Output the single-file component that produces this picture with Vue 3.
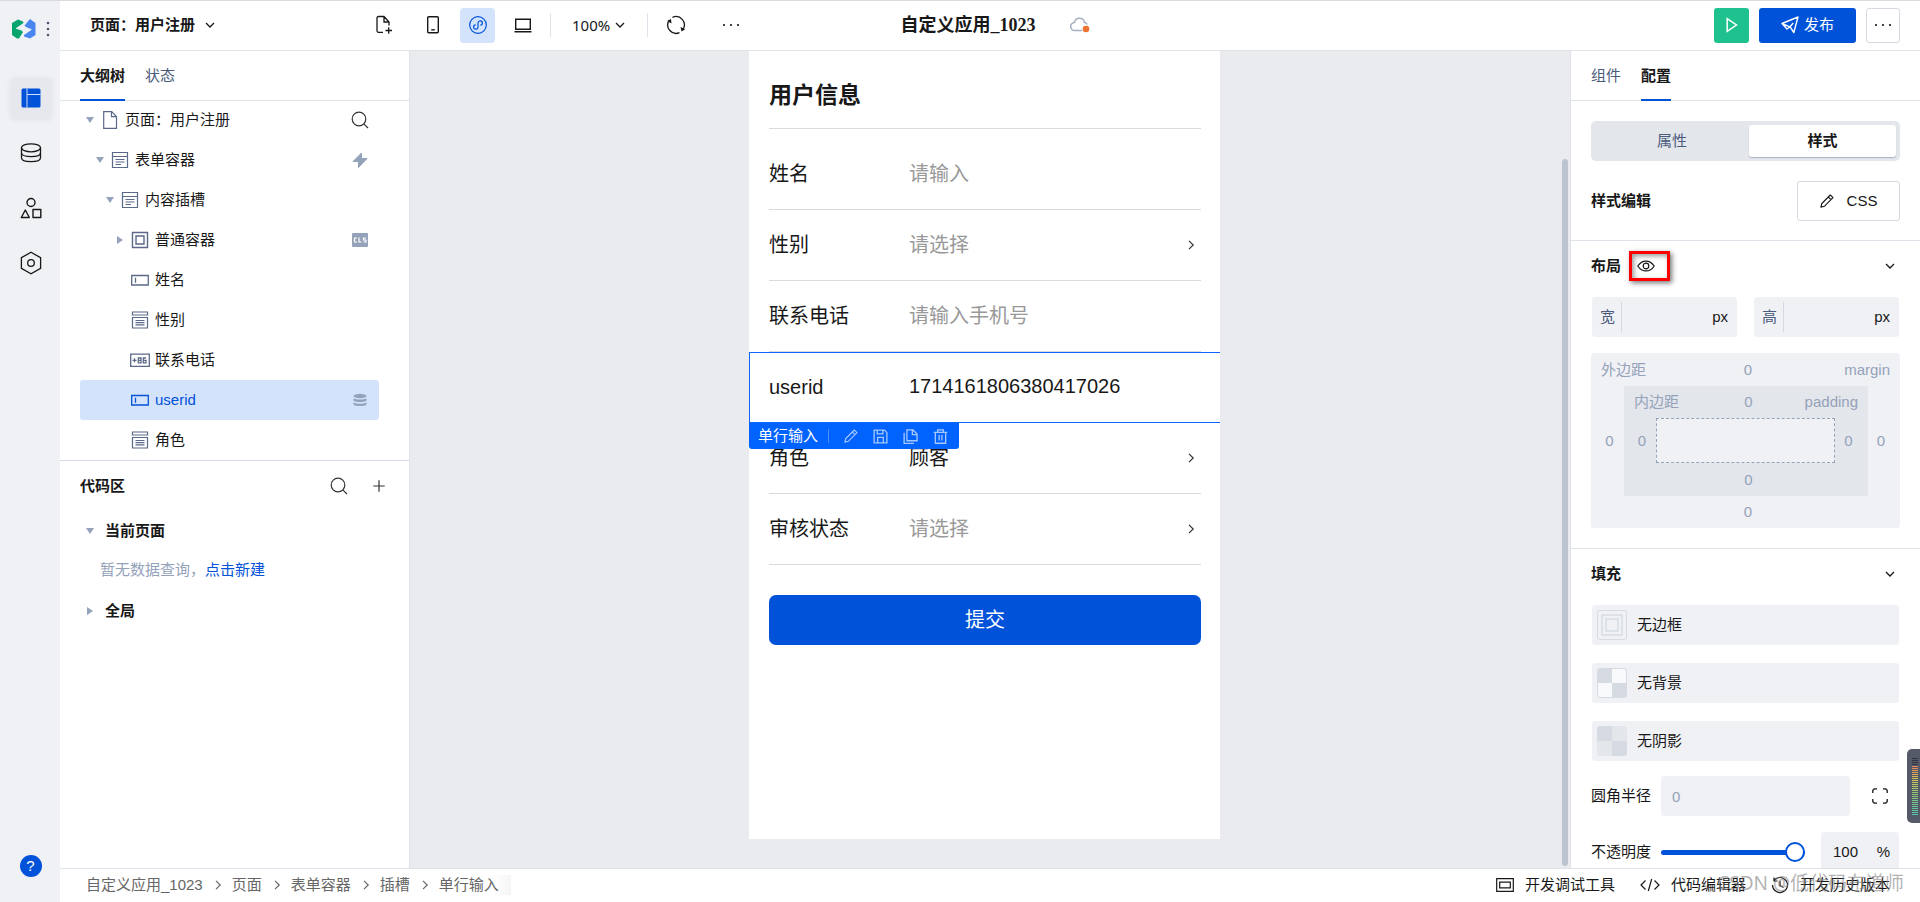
<script setup>
import { ref } from 'vue'

const tree = [
  { level: 0, caret: 'down', icon: 'page', label: '页面：用户注册', badge: 'search' },
  { level: 1, caret: 'down', icon: 'form', label: '表单容器', badge: 'bolt' },
  { level: 2, caret: 'down', icon: 'form', label: '内容插槽' },
  { level: 3, caret: 'right', icon: 'box', label: '普通容器', badge: 'cls' },
  { level: 3, icon: 'input', label: '姓名' },
  { level: 3, icon: 'select', label: '性别' },
  { level: 3, icon: 'phone86', label: '联系电话' },
  { level: 3, icon: 'input', label: 'userid', badge: 'stack', active: true },
  { level: 3, icon: 'select', label: '角色' },
]

const fields = [
  { id: 'name', label: '姓名', type: 'text', placeholder: '请输入', value: '' },
  { id: 'gender', label: '性别', type: 'select', value: '请选择', empty: true },
  { id: 'tel', label: '联系电话', type: 'text', placeholder: '请输入手机号', value: '' },
  { id: 'userid', label: 'userid', type: 'text', placeholder: '', value: '1714161806380417026', selected: true },
  { id: 'role', label: '角色', type: 'select', value: '顾客' },
  { id: 'audit', label: '审核状态', type: 'select', value: '请选择', empty: true },
]

const crumbs = ['自定义应用_1023', '页面', '表单容器', '插槽', '单行输入']
const fills = [
  { label: '无边框', kind: 'frame' },
  { label: '无背景', kind: 'checker' },
  { label: '无阴影', kind: 'shade' },
]
const opacity = ref(100)
</script>

<template>
  <div class="app">
    <svg class="defs" aria-hidden="true">
      <symbol id="i-down" viewBox="0 0 10 10"><path d="M1 3l4 4 4-4" fill="none" stroke="currentColor" stroke-width="1.3" /></symbol>
      <symbol id="i-right" viewBox="0 0 10 10"><path d="M3 .8L7.2 5 3 9.2" fill="none" stroke="currentColor" stroke-width="1.2" /></symbol>
      <symbol id="i-search" viewBox="0 0 18 18"><g fill="none" stroke="currentColor" stroke-width="1.2"><circle cx="8" cy="8" r="6.8" /><path d="M12.8 12.8L17 17" /></g></symbol>
      <symbol id="i-bolt" viewBox="0 0 18 18"><path d="M10.500 2L2 10.500h5.500L7.500 16.500 16 7.500h-5.500V2z" fill="#94a2ba" stroke="#94a2ba" /></symbol>
      <symbol id="i-cls" viewBox="0 0 18 18"><rect x="1" y="2" width="16" height="14" rx="1" fill="#94a2ba" /><path d="M6 7H3.500v4H6M8 6.500V11h2.500M15 7h-2.500v2H15v2h-2.500" fill="none" stroke="#fff" stroke-width="1.200" /></symbol>
      <symbol id="i-stack" viewBox="0 0 18 18"><g fill="#94a2ba"><ellipse cx="9" cy="5" rx="6.500" ry="2.200" /><path d="M2.500 7.200c3 1.800 10 1.800 13 0v2.300c-2 2-11 2-13 0zM2.500 11.500c3 1.800 10 1.800 13 0v2c-2 2-11 2-13 0z" /></g></symbol>
      <symbol id="i-page" viewBox="0 0 18 18"><path d="M2.700.7h8L15.500 5.500v11.800H2.700zM10.500.7v5h5" fill="none" stroke="currentColor" stroke-width="1.200" /></symbol>
      <symbol id="i-form" viewBox="0 0 18 18"><path d="M1.500 1.500h15v15h-15zM1.500 5.500h15M4.500 8.500h9M4.500 11h9M4.500 13.500h5.500" fill="none" stroke="currentColor" stroke-width="1.200" /></symbol>
      <symbol id="i-box" viewBox="0 0 18 18"><path d="M1.500 1.500h15v15h-15zM5 5h8v8H5z" fill="none" stroke="currentColor" stroke-width="1.400" /></symbol>
      <symbol id="i-input" viewBox="0 0 18 18"><path d="M.7 4.500h16.600v9.500H.7zM4.500 6.700v5" fill="none" stroke="currentColor" stroke-width="1.300" /></symbol>
      <symbol id="i-select" viewBox="0 0 18 18"><path d="M1.500 1h15v3h-15zM1.500 6.500h15v10.500h-15zM4.500 9.500h9M4.500 11.700h9M4.500 13.900h9" fill="none" stroke="currentColor" stroke-width="1.200" /></symbol>
      <symbol id="i-phone86" viewBox="0 0 20 18"><path d="M.7 3.200h18.600v12.100H.7z" fill="none" stroke="currentColor" stroke-width="1.300" /><path d="M2.500 9.300h4M4.500 7.300v4M8.300 7h2.700v4.800H8.300zM8.300 9.300H11M16 7h-2.700v4.800H16V9.300h-2.700" fill="none" stroke="currentColor" stroke-width="1.300" /></symbol>
      <symbol id="i-plus" viewBox="0 0 12 12"><path d="M6 .3v11.400M.3 6h11.400" fill="none" stroke="currentColor" stroke-width="1.200" /></symbol>
      <symbol id="i-layout" viewBox="0 0 20 20"><rect x=".5" y=".5" width="19" height="19" rx="1.500" fill="#0052d9" /><path d="M6 .5v19M6 6.500h13.500" stroke="#cfe0fb" stroke-width="1" /></symbol>
      <symbol id="i-db" viewBox="0 0 22 22"><g fill="none" stroke="currentColor" stroke-width="1.300"><ellipse cx="11" cy="5.800" rx="9.500" ry="4" /><path d="M1.500 5.800v10c0 5.200 19 5.200 19 0v-10M1.500 10.700c0 5.200 19 5.200 19 0" /></g></symbol>
      <symbol id="i-shapes" viewBox="0 0 22 22"><g fill="none" stroke="currentColor" stroke-width="1.400" stroke-linejoin="round"><circle cx="11" cy="5.500" r="4" /><path d="M5.300 13l4 7.500h-8zM13 12.500h7.800v8H13z" /></g></symbol>
      <symbol id="i-hex" viewBox="0 0 22 24"><g fill="none" stroke="currentColor" stroke-width="1.300"><path d="M11 1.300l9.600 5.400v10.600L11 22.700l-9.600-5.400V6.700z" /><circle cx="11" cy="12" r="3.300" /></g></symbol>
      <symbol id="i-fileplus" viewBox="0 0 18 20"><path d="M8 17.300H3.500a1.500 1.500 0 0 1-1.500-1.500V3a1.500 1.500 0 0 1 1.500-1.500H9L14 7v3.500M9 1.500V7h5M10.500 15.500h6.500M13.700 12.300v6.500" fill="none" stroke="currentColor" stroke-width="1.300" /></symbol>
      <symbol id="i-mobile" viewBox="0 0 18 20"><g fill="none" stroke="currentColor" stroke-width="1.400"><rect x="3.700" y="1.700" width="10.600" height="16" rx="1" /><path d="M7.200 14.800h3.600" /></g></symbol>
      <symbol id="i-mini" viewBox="0 0 18 18"><g fill="none" stroke="#0052d9" stroke-width="1.200"><circle cx="9" cy="9" r="8.300" /><path d="M6.700 8.800a2.200 2.200 0 1 0 2.300 2.400V6.800a2.200 2.200 0 1 1 2.300 2.400" /></g></symbol>
      <symbol id="i-laptop" viewBox="0 0 18 18"><path d="M1.700 3.200h14.600v10.100H1.700zM.5 15.800h17" fill="none" stroke="currentColor" stroke-width="1.400" /></symbol>
      <symbol id="i-refresh" viewBox="0 0 20 20"><g fill="none" stroke="currentColor" stroke-width="1.300"><path d="M6.500 2.300a8.300 8.300 0 0 1 10.500 12M13.500 17.600A8.300 8.300 0 0 1 3 5.700" /></g><path d="M14.500 12l1 4.500 3.700-2.300zM5.500 8.500L5 4 1.200 6z" fill="currentColor" /></symbol>
      <symbol id="i-dots" viewBox="0 0 18 4"><g fill="currentColor"><circle cx="2" cy="2" r="1.100" /><circle cx="9" cy="2" r="1.100" /><circle cx="16" cy="2" r="1.100" /></g></symbol>
      <symbol id="i-cloud" viewBox="0 0 20 16"><path d="M12 13.500H4.800a4 4 0 0 1-.3-8C5.500 0 13.500 0 14.300 5.200c1.500.3 2.500 1.300 3 2.300" fill="none" stroke="#a6b1c4" stroke-width="1.500" /><circle cx="16" cy="12" r="3.300" fill="#ed7131" /></symbol>
      <symbol id="i-play" viewBox="0 0 12 16"><path d="M1.200 1.700v12.600L10.500 8z" fill="none" stroke="#fff" stroke-width="1.500" /></symbol>
      <symbol id="i-send" viewBox="0 0 18 18"><path d="M1 7.500L17 1l-4.200 15.500-3.500-5.300zM1 7.500l5 5.500 2.800-2 3.500-4" fill="none" stroke="#fff" stroke-width="1.400" stroke-linejoin="round" /></symbol>
      <symbol id="i-pencil" viewBox="0 0 14 14"><path d="M.9 13.100l.9-3.600L10.300 1l2.700 2.700-8.500 8.500zM8.300 3L11 5.700" fill="none" stroke="currentColor" stroke-width="1.100" stroke-linejoin="round" /></symbol>
      <symbol id="i-save" viewBox="0 0 16 16"><path d="M1.200 1.200h11l2.600 2.600v11H1.200zM4.500 1.200v4h6v-4M5 14.500V9h6v5.500" fill="none" stroke="currentColor" stroke-width="1.400" /></symbol>
      <symbol id="i-copy" viewBox="0 0 16 16"><path d="M4.200 1h6.500L15 5.300v7.200H4.200zM10 1v5h5M1.200 4v11.300h10.500" fill="none" stroke="currentColor" stroke-width="1.400" /></symbol>
      <symbol id="i-trash" viewBox="0 0 16 16"><path d="M.8 3.500h14.400M5 3.500V.9h6v2.600M2.500 3.500v11.700h11V3.500M6.500 6.300v6M9.500 6.300v6" fill="none" stroke="currentColor" stroke-width="1.400" /></symbol>
      <symbol id="i-eye" viewBox="0 0 18 12"><g fill="none" stroke="currentColor" stroke-width="1.200"><path d="M.8 6C5-.6 13-.6 17.200 6 13 12.600 5 12.600.8 6z" /><circle cx="9" cy="6" r="2.800" /></g></symbol>
      <symbol id="i-corners" viewBox="0 0 16 16"><path d="M.8 5V2.300L2.300.8H5M11 .8h2.700l1.500 1.500V5M15.200 11v2.700l-1.500 1.500H11M5 15.200H2.300L.8 13.700V11" fill="none" stroke="currentColor" stroke-width="1.300" /></symbol>
      <symbol id="i-debug" viewBox="0 0 18 14"><path d="M.7.7h16.600v12.600H.7zM3.700 4.200h10.600v5.600H3.700z" fill="none" stroke="currentColor" stroke-width="1.200" /></symbol>
      <symbol id="i-code" viewBox="0 0 20 14"><path d="M5.500 2.500L1 7l4.500 4.500M14.500 2.500L19 7l-4.500 4.500M11.700 1l-3.400 12" fill="none" stroke="currentColor" stroke-width="1.200" /></symbol>
      <symbol id="i-history" viewBox="0 0 18 18"><path d="M3 4.500A7.500 7.500 0 1 1 1.500 9M3 1.500v3.500h3.500M9 5v4.500l3.500 2" fill="none" stroke="currentColor" stroke-width="1.200" /></symbol>
    </svg>

    <nav class="rail">
      <div class="brand">
        <svg width="24" height="20" viewBox="0 0 24 20">
          <path d="M0 4L6 .5l5 2 .5 1.500L3.500 9.500l6 2L11 13 7 19.500H5L0 16z" fill="#07a56e" />
          <path d="M18 0l5.500 4v12L18 19.500l-6-2V16l8-5.500L14 8l-1.500-1.500z" fill="#4a86f0" />
        </svg>
        <svg class="brand-dots" width="4" height="16" viewBox="0 0 4 16"><g fill="#4b5670"><circle cx="2" cy="2" r="1.300" /><circle cx="2" cy="8" r="1.300" /><circle cx="2" cy="14" r="1.300" /></g></svg>
      </div>
      <button class="rail-btn on" aria-label="布局"><svg width="20" height="20"><use href="#i-layout" /></svg></button>
      <button class="rail-btn" aria-label="数据"><svg width="22" height="22"><use href="#i-db" /></svg></button>
      <button class="rail-btn" aria-label="素材"><svg width="22" height="22"><use href="#i-shapes" /></svg></button>
      <button class="rail-btn" aria-label="设置"><svg width="22" height="24"><use href="#i-hex" /></svg></button>
      <button class="help">?</button>
    </nav>

    <div class="main">
      <header class="top">
        <div class="top-left">
          <button class="page-pick">页面：用户注册<svg width="10" height="10"><use href="#i-down" /></svg></button>
          <div class="tools">
            <button class="tool" aria-label="新建页面"><svg width="18" height="20"><use href="#i-fileplus" /></svg></button>
            <button class="tool phone-tool" aria-label="手机"><svg width="18" height="20"><use href="#i-mobile" /></svg></button>
            <button class="tool on" aria-label="小程序"><svg width="18" height="18"><use href="#i-mini" /></svg></button>
            <button class="tool" aria-label="电脑"><svg width="18" height="18"><use href="#i-laptop" /></svg></button>
            <button class="zoom">100%<svg width="10" height="10"><use href="#i-down" /></svg></button>
            <button class="tool refresh" aria-label="刷新"><svg width="20" height="20"><use href="#i-refresh" /></svg></button>
            <button class="tool" aria-label="更多"><svg width="18" height="4"><use href="#i-dots" /></svg></button>
          </div>
        </div>
        <div class="title"><span>自定义应用_1023</span><svg width="20" height="16"><use href="#i-cloud" /></svg></div>
        <div class="top-right">
          <button class="play" aria-label="预览"><svg width="12" height="16"><use href="#i-play" /></svg></button>
          <button class="publish"><svg width="18" height="18"><use href="#i-send" /></svg>发布</button>
          <button class="more" aria-label="更多"><svg width="18" height="4"><use href="#i-dots" /></svg></button>
        </div>
      </header>

      <div class="body">
        <aside class="side">
          <div class="tabs"><button class="tab on">大纲树</button><button class="tab">状态</button></div>
          <div class="tree">
            <div v-for="(n, i) in tree" :key="i" class="node" :class="[{ active: n.active }, 'lv' + n.level]">
              <span class="caret"><i v-if="n.caret" :class="n.caret"></i></span>
              <svg class="node-icon" width="20" height="18"><use :href="'#i-' + n.icon" /></svg>
              <button class="node-label">{{ n.label }}</button>
              <svg v-if="n.badge" class="badge" width="18" height="18"><use :href="'#i-' + n.badge" /></svg>
            </div>
          </div>
          <div class="code">
            <div class="code-head">
              <h2>代码区</h2>
              <button aria-label="搜索"><svg width="18" height="18"><use href="#i-search" /></svg></button>
              <button aria-label="新增"><svg width="12" height="12"><use href="#i-plus" /></svg></button>
            </div>
            <div class="code-row"><span class="caret"><i class="down"></i></span>当前页面</div>
            <p class="none">暂无数据查询，<a href="#new">点击新建</a></p>
            <div class="code-row"><span class="caret"><i class="right"></i></span>全局</div>
          </div>
        </aside>

        <main class="canvas">
          <form class="phone" @submit.prevent>
            <h1>用户信息</h1>
            <div v-for="f in fields" :key="f.id" class="field" :class="{ selected: f.selected }">
              <label :for="f.id">{{ f.label }}</label>
              <input v-if="f.type === 'text'" :id="f.id" type="text" :placeholder="f.placeholder" :value="f.value">
              <template v-else>
                <select :id="f.id" :class="{ empty: f.empty }"><option>{{ f.value }}</option></select>
                <svg class="arrow" width="10" height="10"><use href="#i-right" /></svg>
              </template>
              <div v-if="f.selected" class="actions">
                <span>单行输入</span>
                <button type="button" aria-label="编辑"><svg width="14" height="14"><use href="#i-pencil" /></svg></button>
                <button type="button" aria-label="保存"><svg width="15" height="15"><use href="#i-save" /></svg></button>
                <button type="button" aria-label="复制"><svg width="15" height="15"><use href="#i-copy" /></svg></button>
                <button type="button" aria-label="删除"><svg width="15" height="15"><use href="#i-trash" /></svg></button>
              </div>
            </div>
            <button class="submit">提交</button>
          </form>
          <div class="scroll"></div>
        </main>

        <aside class="panel">
          <div class="tabs"><button class="tab">组件</button><button class="tab on">配置</button></div>
          <div class="panel-body">
            <section class="sec first">
              <div class="segment"><button>属性</button><button class="on">样式</button></div>
              <div class="edit">
                <h3>样式编辑</h3>
                <button class="css"><svg width="14" height="14"><use href="#i-pencil" /></svg>CSS</button>
              </div>
            </section>
            <section class="sec">
              <div class="sec-head">
                <h3>布局</h3>
                <button class="mark" aria-label="显示"><svg width="18" height="12"><use href="#i-eye" /></svg></button>
                <svg class="fold" width="10" height="10"><use href="#i-down" /></svg>
              </div>
              <div class="sizes">
                <div class="size"><label for="w">宽</label><input id="w" type="text"><span>px</span></div>
                <div class="size"><label for="h">高</label><input id="h" type="text"><span>px</span></div>
              </div>
              <div class="boxm">
                <div class="boxm-top"><span>外边距</span><input value="0" aria-label="上外边距"><span>margin</span></div>
                <input value="0" aria-label="左外边距" class="l">
                <div class="boxm pad">
                  <div class="boxm-top"><span>内边距</span><input value="0" aria-label="上内边距"><span>padding</span></div>
                  <input value="0" aria-label="左内边距" class="l">
                  <div class="core"></div>
                  <input value="0" aria-label="右内边距" class="r">
                  <input value="0" aria-label="下内边距" class="b">
                </div>
                <input value="0" aria-label="右外边距" class="r">
                <input value="0" aria-label="下外边距" class="b">
              </div>
            </section>
            <section class="sec">
              <div class="sec-head"><h3>填充</h3><svg class="fold" width="10" height="10"><use href="#i-down" /></svg></div>
              <div class="fills">
                <button v-for="f in fills" :key="f.kind" class="fill">
                  <span class="swatch" :class="f.kind"></span>{{ f.label }}
                </button>
              </div>
              <div class="line">
                <label for="radius">圆角半径</label>
                <input id="radius" class="radius" type="text" placeholder="0">
                <button class="corner" aria-label="独立圆角"><svg width="16" height="16"><use href="#i-corners" /></svg></button>
              </div>
              <div class="line">
                <label for="op">不透明度</label>
                <input id="op" v-model="opacity" class="range" type="range" min="0" max="100">
                <div class="percent"><input v-model="opacity" type="text" aria-label="不透明度数值"><span>%</span></div>
              </div>
            </section>
          </div>
        </aside>
      </div>

      <footer class="foot">
        <div class="crumbs">
          <template v-for="(c, i) in crumbs" :key="c">
            <svg v-if="i" width="10" height="10"><use href="#i-right" /></svg>
            <a href="#crumb">{{ c }}</a>
          </template>
        </div>
        <div class="links">
          <button><svg width="18" height="14"><use href="#i-debug" /></svg>开发调试工具</button>
          <button><svg width="20" height="14"><use href="#i-code" /></svg>代码编辑器</button>
          <button><svg width="18" height="18"><use href="#i-history" /></svg>开发历史版本</button>
        </div>
        <div class="mark-text">CSDN @低代码布道师</div>
      </footer>
    </div>
    <div class="meter"><i></i></div>
  </div>
</template>

<style>
body { margin: 0; }
</style>

<style scoped>
* { box-sizing: border-box; }
.app {
  position: relative; display: flex; height: 100vh; overflow: hidden;
  font: 15px/20px "Liberation Sans", "Noto Sans CJK SC", sans-serif; color: #181818; background: #fff;
  box-shadow: inset 0 1px #d9dade;
}
.defs { position: absolute; width: 0; height: 0; }
button, input, select { font: inherit; color: inherit; border: 0; background: none; padding: 0; margin: 0; outline: 0; min-width: 0; }
button { display: inline-flex; align-items: center; justify-content: center; white-space: nowrap; cursor: pointer; }
select { appearance: none; }
svg { flex: none; display: block; }
h1, h2, h3, p { margin: 0; }
h2, h3 { font-size: 15px; font-weight: 600; }
a { text-decoration: none; }

.rail { width: 60px; flex: none; display: flex; flex-direction: column; align-items: center; gap: 15px; background: #f0f1f5; border-top: 1px solid #d9dade; padding-bottom: 25px; padding-left: 1px; }
.brand { width: 100%; height: 62px; padding: 18px 0 0 11px; display: flex; gap: 10px; }
.brand-dots { margin-top: 2px; }
.rail-btn { width: 40px; height: 40px; border-radius: 4px; }
.rail-btn.on { background: #e6e8ed; box-shadow: 0 1px 6px #00000014; }
.help { margin-top: auto; width: 22px; height: 22px; border-radius: 50%; background: #0052d9; color: #fff; }

.main { flex: 1; min-width: 0; display: flex; flex-direction: column; }
.top { height: 51px; flex: none; display: grid; grid-template-columns: 1fr auto 1fr; align-items: center; padding: 0 20px 0 30px; border-bottom: 1px solid #e0e3ea; }
.top-left { display: flex; align-items: center; gap: 151px; }
.page-pick { font-weight: 600; gap: 10px; }
.tools { display: flex; align-items: center; gap: 10px; }
.tool { width: 35px; height: 35px; border-radius: 4px; }
.phone-tool { margin-left: 4px; }
.tool.on { background: #d4e3fc; }
.zoom { height: 24px; gap: 5px; padding: 0 22px 0 21px; border: solid #dfe2e8; border-width: 0 1px; font-family: "Noto Sans", sans-serif; }
.refresh { margin: 0 10px 0 0; }
.title { display: flex; align-items: center; gap: 34px; font: 600 18px/24px "Liberation Serif", "Noto Sans CJK SC", serif; }
.top-right { display: flex; justify-content: flex-end; gap: 10px; }
.play { width: 35px; height: 35px; border-radius: 3px; background: #1fc28f; }
.publish { width: 97px; height: 35px; border-radius: 3px; background: #0052d9; color: #fff; gap: 5px; }
.more { width: 34px; height: 35px; border-radius: 3px; border: 1px solid #d5d9e2; }

.body { flex: 1; min-height: 0; display: flex; }
.side { width: 350px; flex: none; border-right: 1px solid #dfe2ea; }
.tabs { height: 50px; flex: none; display: flex; gap: 20px; padding: 0 20px; border-bottom: 1px solid #e0e3ea; }
.tab { height: 50px; padding-top: 2px; border-bottom: 2px solid transparent; color: #4b5b7c; }
.tab.on { color: #181818; font-weight: 600; border-color: #0052d9; }
.tree { margin-top: -1px; padding: 0 30px 0 20px; border-bottom: 1px solid #d5d9e6; }
.node { height: 40px; display: flex; align-items: center; padding-right: 10px; border-radius: 3px; }
.lv1 { padding-left: 10px; }
.lv2 { padding-left: 20px; }
.lv3 { padding-left: 30px; }
.caret { width: 20px; flex: none; display: flex; justify-content: center; }
.down { border: 4px solid transparent; border-top: 6px solid #94a2ba; border-bottom: 0; }
.right { border: 4px solid transparent; border-left: 6px solid #94a2ba; border-right: 0; }
.node-icon { color: #5b6a88; }
.node-label { margin-left: 5px; }
.badge { margin-left: auto; color: #333; }
.active { background: #d4e3fc; }
.active .node-icon, .active .node-label { color: #0052d9; }
.code { padding: 0 24px 0 20px; }
.code-head { height: 50px; display: flex; align-items: center; gap: 25px; color: #333; }
.code-head h2 { margin-right: auto; color: #181818; }
.code-row { height: 40px; display: flex; align-items: center; gap: 5px; font-weight: 600; }
.none { line-height: 38px; padding: 0 0 2px 20px; color: #94a2ba; }
.none a { color: #0052d9; }

.canvas { flex: 1; min-width: 0; display: flex; background: #eaebef; }
.phone { width: 471px; margin: 0 auto 29px; padding: 0 19px 0 20px; background: #fff; }
h1 { height: 78px; margin-bottom: 10px; padding-top: 10px; font-size: 23px; line-height: 68px; border-bottom: 1px solid #d9dade; }
.field { position: relative; height: 71px; display: flex; align-items: center; font-size: 20px; line-height: 28px; border-bottom: 1px solid #d9dade; }
.field label { width: 140px; flex: none; }
.field > input, .field select { flex: 1; height: 30px; }
.field > input::placeholder { color: #999; opacity: 1; }
.empty { color: #999; }
.arrow { margin-right: 5px; color: #333; }
.selected { margin: 0 -19px 0 -20px; padding: 0 19px 2px 19px; border: 1px solid #0f67ff; border-right: 0; }
.actions { position: absolute; left: -1px; top: 70px; z-index: 1; height: 26px; display: flex; align-items: center; gap: 15px; padding: 0 11px 0 9px; font-size: 15px; line-height: 20px; color: #fff; background: #0062ff; border-radius: 0 0 3px 3px; }
.actions span { padding-right: 10px; border-right: 1px solid #4d91ff; line-height: 14px; }
.actions button { color: #a6c8ff; }
.submit { width: 100%; height: 50px; margin-top: 30px; border-radius: 7px; background: #0052d9; color: #fff; font-size: 20px; }
.scroll { width: 6px; margin: 108px 2px 2px 3px; border-radius: 3px; background: #bcc4d0; }

.panel { width: 350px; flex: none; display: flex; flex-direction: column; border-left: 1px solid #dfe2ea; }
.panel-body { flex: 1; min-height: 0; overflow: hidden; }
.sec { padding: 0 20px 20px; }
.first { padding-bottom: 19px; }
.sec + .sec { border-top: 1px solid #e0e3ea; }
.segment { margin-top: 20px; height: 40px; display: grid; grid-template-columns: 1fr 147px; padding: 4px; border-radius: 5px; background: #e3e6eb; }
.segment button { color: #4b5b7c; }
.segment .on { background: #fff; color: #181818; font-weight: 600; border-radius: 3px; box-shadow: 0 1px 1px #a9b3c4; }
.edit { margin-top: 20px; display: flex; align-items: center; justify-content: space-between; }
.css { width: 103px; height: 40px; gap: 13px; border: 1px solid #d5d9e2; border-radius: 3px; }
.sec-head { height: 56px; display: flex; align-items: center; gap: 8px; padding: 0 5px 6px 0; }
.fold { margin-left: auto; }
.mark { width: 41px; height: 30px; padding-right: 7px; border: 3px solid #f00; box-shadow: 2px 2px 5px #0008, inset 2px 2px 5px #0006; }
.sizes { display: flex; gap: 17px; padding: 0 1px; }
.size { flex: 1; min-width: 0; height: 40px; display: flex; align-items: center; padding: 0 9px 0 8px; border-radius: 3px; background: #f0f1f5; }
.size label { padding-right: 6px; line-height: 30px; border-right: 1px solid #d5d9e2; color: #4b5b7c; }
.size input { flex: 1; }
.boxm { display: grid; grid-template: 33px 110px 32px / 33px 1fr 32px; margin-top: 16px; border-radius: 3px; background: #f0f1f5; color: #94a2ba; }
.boxm-top { grid-column: 1 / -1; display: grid; grid-template-columns: 1fr 30px 1fr; align-items: center; padding: 0 10px; }
.boxm-top span:last-child { text-align: right; }
.boxm input { text-align: center; }
.boxm-top input, .boxm .b { padding-left: 5px; }
.boxm .l { padding-left: 4px; }
.boxm .r { padding-right: 6px; }
.boxm .b { grid-column: 1 / -1; }
.pad { grid-template: 32px 45px 33px / 32px 1fr 33px; margin: 0; border-radius: 0; background: #e3e6eb; }
.core { border: 1px dashed #94a2ba; background: #f0f1f5; }
.fills { display: grid; gap: 18px; padding: 0 1px; margin-bottom: 15px; }
.fill { height: 40px; justify-content: flex-start; gap: 10px; padding-left: 5px; border-radius: 3px; background: #f0f1f5; }
.swatch { width: 30px; height: 30px; border-radius: 3px; border: 1px solid #d5dae3; display: grid; place-items: center; }
.frame::before { content: ""; width: 18px; height: 18px; border: 2px solid #dde1e8; box-shadow: inset 0 0 0 2px #f0f1f5, inset 0 0 0 4px #dde1e8; }
.checker { background: conic-gradient(#f8f9fb 25%, #d5dae3 0 50%, #f8f9fb 0 75%, #d5dae3 0); }
.shade { border: 0; background: conic-gradient(#e3e6eb 25%, #d5dae3 0 50%, #e3e6eb 0 75%, #d5dae3 0); }
.line { height: 40px; margin-bottom: 16px; display: flex; align-items: center; gap: 10px; padding-right: 1px; }
.line label { flex: none; }
.radius { flex: 1; height: 40px; padding: 0 11px; border-radius: 3px; background: #f0f1f5; }
.radius::placeholder { color: #94a2ba; opacity: 1; }
.corner { width: 39px; height: 40px; }
.range { flex: 1; height: 20px; appearance: none; }
.range::-webkit-slider-runnable-track { height: 5px; border-radius: 3px; background: #0052d9; }
.range::-webkit-slider-thumb { appearance: none; width: 20px; height: 20px; margin-top: -8px; border: 2px solid #0052d9; border-radius: 50%; background: #fff; }
.percent { width: 78px; height: 40px; margin-left: 6px; display: flex; align-items: center; padding: 0 9px 0 12px; border-radius: 3px; background: #f0f1f5; }
.percent input { flex: 1; }

.foot { position: relative; height: 34px; flex: none; display: flex; align-items: center; justify-content: space-between; padding: 0 30px 2px 26px; border-top: 1px solid #dfe2ea; }
.crumbs { display: flex; align-items: center; gap: 9px; padding-right: 12px; color: #666; background: linear-gradient(90deg, #fff 96%, #f5f5f7); }
.crumbs svg { margin-left: 1px; }
.crumbs a { color: #666; }
.links { display: flex; gap: 25px; }
.links button { gap: 11px; }
.mark-text { position: absolute; right: 16px; top: 1px; font: 19px/26px "Noto Sans", "Noto Sans CJK SC", sans-serif; color: #80808099; pointer-events: none; }
.meter { position: absolute; right: 0; top: 749px; width: 13px; height: 74px; padding: 9px 2px 8px 5px; border-radius: 5px 0 0 5px; background: #555a69; }
.meter i { display: block; height: 100%; background: repeating-linear-gradient(#0000 0 1px, #555a69 1px 2px), linear-gradient(#333642 0 12%, #e8825e 14%, #d9c857 38%, #8fc97a 65%, #55c4ae); }
</style>
